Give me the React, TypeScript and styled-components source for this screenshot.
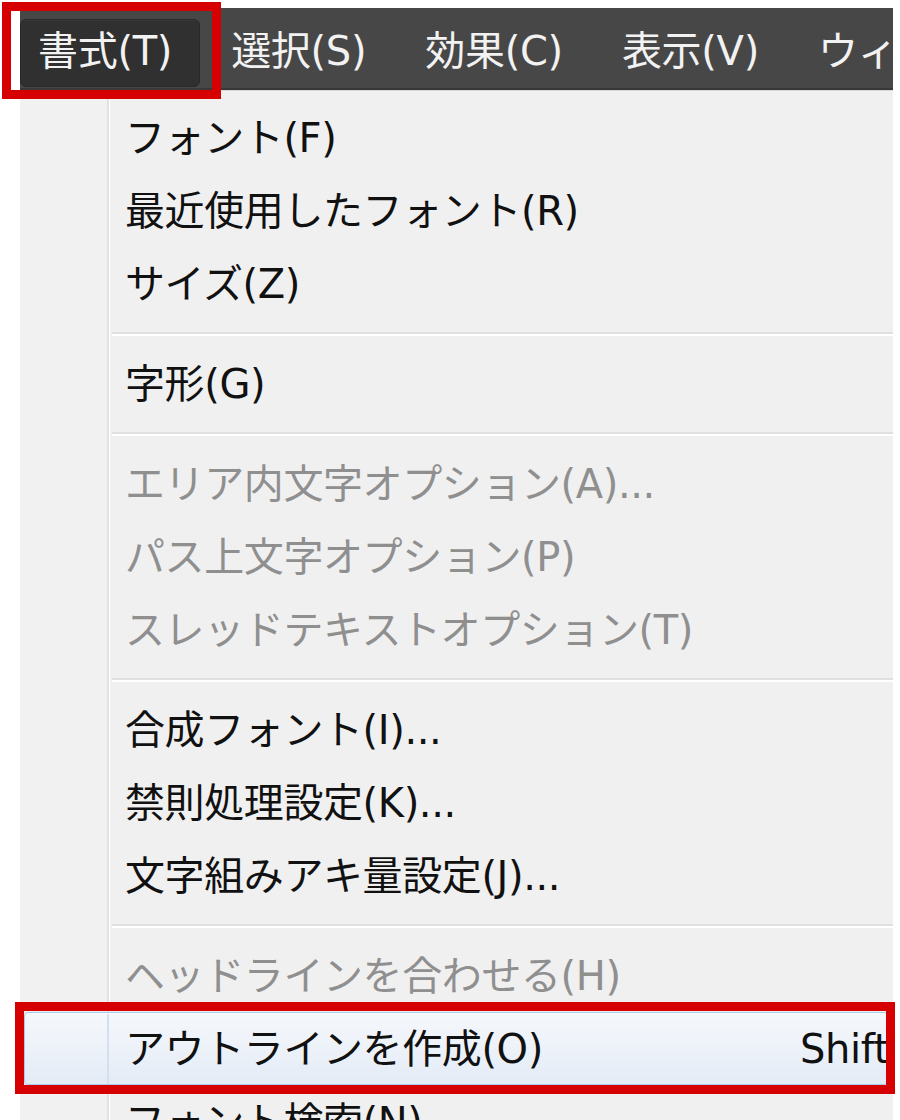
import React from "react";
import styled, { createGlobalStyle, css } from "styled-components";

const GlobalStyle = createGlobalStyle`
  html, body {
    margin: 0;
    padding: 0;
    background: #ffffff;
  }
  body {
    font-family: "DejaVu Sans", "Noto Sans CJK JP", sans-serif;
  }
`;

const Page = styled.div`
  position: relative;
  width: 900px;
  height: 1120px;
  overflow: hidden;
  background: #ffffff;
  padding: 8px 7px 0 20px;
  box-sizing: border-box;
  display: flex;
  flex-direction: column;
  font-family: "DejaVu Sans", "Noto Sans CJK JP", sans-serif;
`;

const MenuBar = styled.div`
  height: 82px;
  flex: none;
  display: flex;
  align-items: stretch;
  gap: 13px;
  background: #474747;
  border-bottom: 2px solid #383838;
  box-sizing: border-box;
  overflow: hidden;
  white-space: nowrap;
`;

const BarItem = styled.div<{ $selected?: boolean }>`
  display: flex;
  align-items: center;
  margin: 11px 0 1px;
  padding: 0 27px 4px 17px;
  font-size: 40px;
  line-height: 1;
  letter-spacing: -0.3px;
  color: #f2f2f2;
  border-radius: 6px;
  border: 1px solid transparent;
  ${(p) =>
    p.$selected &&
    css`
      background: #303030;
      border-color: #282828;
      box-shadow: inset 0 1px 0 #3a3a3a;
    `}
`;

const Panel = styled.div`
  flex: 1;
  position: relative;
  padding-top: 10px;
  background-color: #f0f0f0;
  background-image: linear-gradient(
    to right,
    #f1f1f1 0,
    #f1f1f1 87px,
    #e2e2e2 87px,
    #e2e2e2 89px,
    #ffffff 89px,
    #ffffff 90px,
    #f0f0f0 90px
  );
  border-top: 1px solid #d6d6d6;
  overflow: hidden;
`;

const Row = styled.div<{ $disabled?: boolean; $active?: boolean }>`
  height: 73px;
  box-sizing: border-box;
  display: grid;
  grid-template-columns: 675px max-content;
  align-items: center;
  padding: 0 0 0 105px;
  font-size: 40px;
  line-height: 1;
  letter-spacing: -0.4px;
  white-space: nowrap;
  color: ${(p) => (p.$disabled ? "#8f8f8f" : "#111111")};
  ${(p) =>
    p.$active &&
    css`
      margin: 0 5px 0 4px;
      padding-left: 100px;
      border: 1px solid #a6cbf1;
      border-radius: 4px;
      background-image: linear-gradient(
          to right,
          transparent 0,
          transparent 82px,
          rgba(210, 222, 236, 0.9) 82px,
          rgba(210, 222, 236, 0.9) 84px,
          transparent 84px
        ),
        linear-gradient(to bottom, #f5f8fc 0%, #edf2f9 50%, #e3ebf6 100%);
      box-shadow: inset 0 1px 0 #fbfdff;
    `}
`;

const Shortcut = styled.span`
  color: #111111;
`;

const Separator = styled.div`
  height: 27px;
  box-sizing: border-box;
  margin-left: 92px;
  display: flex;
  flex-direction: column;
  justify-content: center;
  &::before {
    content: "";
    display: block;
    height: 2px;
    background: #e0e0e0;
  }
  &::after {
    content: "";
    display: block;
    height: 2px;
    background: #ffffff;
  }
`;

const Highlight = styled.div<{
  $top: number;
  $left: number;
  $width: number;
  $height: number;
}>`
  position: absolute;
  top: ${(p) => p.$top}px;
  left: ${(p) => p.$left}px;
  width: ${(p) => p.$width}px;
  height: ${(p) => p.$height}px;
  border: 9px solid #d60000;
  box-sizing: border-box;
  pointer-events: none;
`;

type Item = {
  label: string;
  disabled?: boolean;
  active?: boolean;
  shortcut?: string;
};

const sections: Item[][] = [
  [
    { label: "フォント(F)" },
    { label: "最近使用したフォント(R)" },
    { label: "サイズ(Z)" },
  ],
  [{ label: "字形(G)" }],
  [
    { label: "エリア内文字オプション(A)...", disabled: true },
    { label: "パス上文字オプション(P)", disabled: true },
    { label: "スレッドテキストオプション(T)", disabled: true },
  ],
  [
    { label: "合成フォント(I)..." },
    { label: "禁則処理設定(K)..." },
    { label: "文字組みアキ量設定(J)..." },
  ],
  [
    { label: "ヘッドラインを合わせる(H)", disabled: true },
    { label: "アウトラインを作成(O)", active: true, shortcut: "Shift+Ctrl+O" },
    { label: "フォント検索(N)" },
  ],
];

const barItems = ["書式(T)", "選択(S)", "効果(C)", "表示(V)", "ウィンドウ(W)"];

export default function App() {
  return (
    <>
      <GlobalStyle />
      <Page>
        <MenuBar>
          {barItems.map((b, i) => (
            <BarItem key={b} $selected={i === 0}>
              {b}
            </BarItem>
          ))}
        </MenuBar>
        <Panel>
          {sections.map((sec, si) => (
            <React.Fragment key={si}>
              {si > 0 && <Separator />}
              {sec.map((it) => (
                <Row key={it.label} $disabled={it.disabled} $active={it.active}>
                  <span>{it.label}</span>
                  {it.shortcut && <Shortcut>{it.shortcut}</Shortcut>}
                </Row>
              ))}
            </React.Fragment>
          ))}
        </Panel>
        <Highlight $top={2} $left={2} $width={219} $height={97} />
        <Highlight $top={1002} $left={15} $width={880} $height={92} />
      </Page>
    </>
  );
}
